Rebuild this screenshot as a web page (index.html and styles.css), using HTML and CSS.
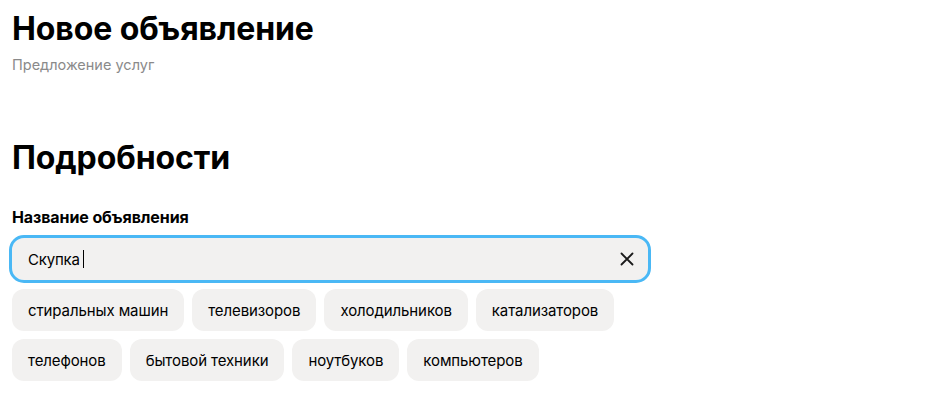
FILE: index.html
```html
<!DOCTYPE html>
<html lang="ru">
<head>
<meta charset="utf-8">
<link rel="stylesheet" href="styles.css">
</head>
<body>
<div class="page">
  <header class="head">
    <h1 class="title">Новое объявление</h1>
    <div class="subtitle">Предложение услуг</div>
  </header>
  <section class="details">
    <h2 class="section-title">Подробности</h2>
    <label class="label">Название объявления</label>
    <div class="input">
      <span class="input-text">Скупка</span><span class="caret"></span>
      <svg class="clear" width="14" height="14" viewBox="0 0 14 14"><path d="M1.5 1.5 L12.5 12.5 M12.5 1.5 L1.5 12.5" stroke="#1a1a1a" stroke-width="1.8" stroke-linecap="round"/></svg>
    </div>
    <div class="chips">
      <span class="chip">стиральных машин</span>
      <span class="chip">телевизоров</span>
      <span class="chip">холодильников</span>
      <span class="chip">катализаторов</span>
      <span class="chip">телефонов</span>
      <span class="chip">бытовой техники</span>
      <span class="chip">ноутбуков</span>
      <span class="chip">компьютеров</span>
    </div>
  </section>
</div>
</body>
</html>
```

FILE: styles.css
```css
* { box-sizing: border-box; }
html, body { margin: 0; padding: 0; background: #fff; }
body { font-family: Inter, "Noto Sans", sans-serif; color: #000; }
.page { padding: 9px 12px; }
.title { margin: 0; font-size: 32px; line-height: 40px; font-weight: 700; letter-spacing: -0.1px; }
.subtitle { margin-top: 7px; font-size: 14.5px; line-height: 18px; color: #8a8a8a; }
.details { margin-top: 64px; }
.section-title { margin: 0; font-size: 32px; line-height: 40px; font-weight: 700; letter-spacing: -0.1px; }
.label { display: block; margin-top: 29px; font-size: 16px; line-height: 20px; font-weight: 700; letter-spacing: -0.1px; }
.input { margin-top: 11px; width: 636px; height: 42px; background: #f2f1f0; border-radius: 12px; outline: 3px solid #4ab8f5; display: flex; align-items: center; padding: 0 14px 0 16px; font-size: 15px; letter-spacing: -0.2px; }
.caret { width: 1px; height: 18px; background: #000; margin-left: 3px; }
.clear { margin-left: auto; }
.chips { margin-top: 9px; width: 640px; display: flex; flex-wrap: wrap; gap: 8px; }
.chip { background: #f2f1f0; border-radius: 12px; height: 42px; padding: 0 16px; display: flex; align-items: center; font-size: 15px; letter-spacing: -0.1px; }
```
